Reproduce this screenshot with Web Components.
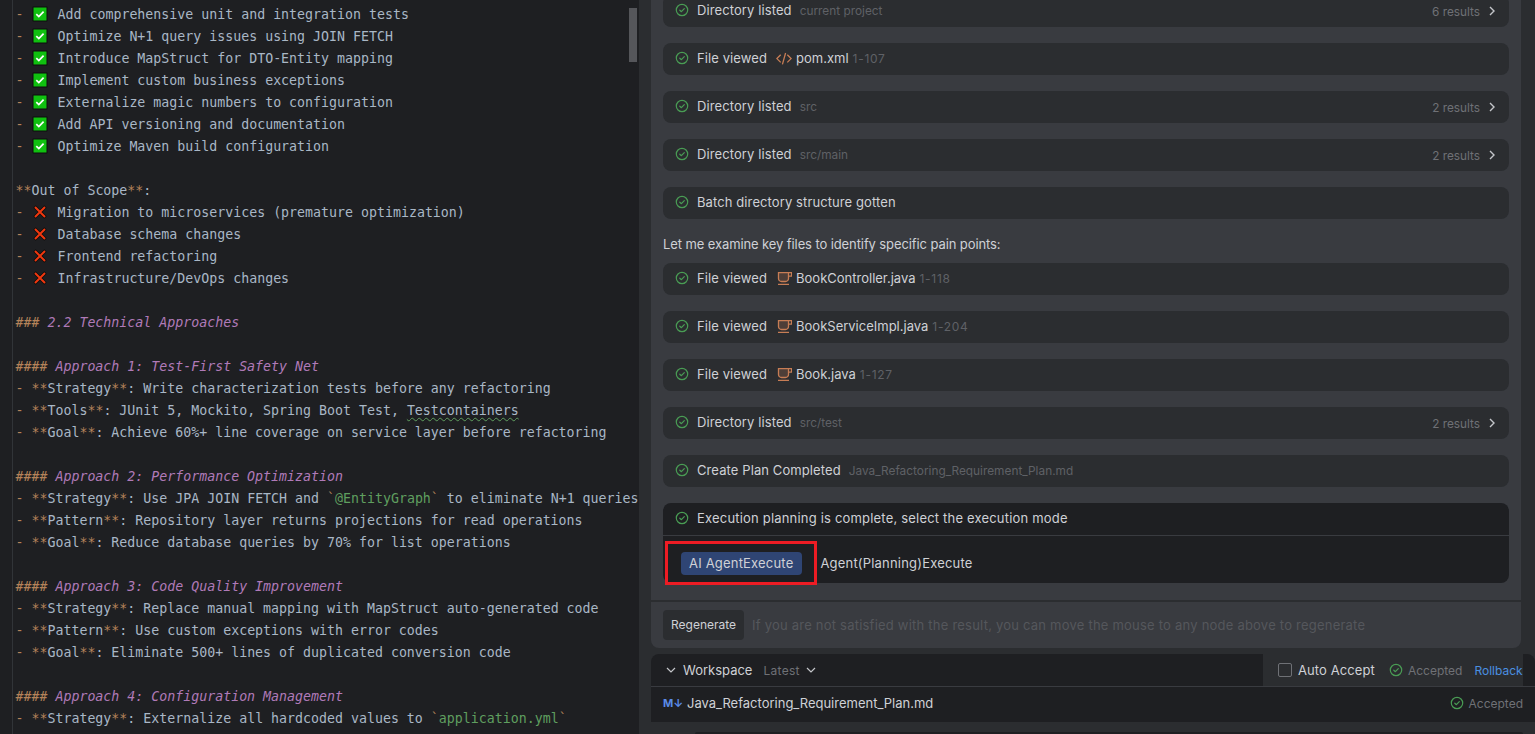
<!DOCTYPE html>
<html>
<head>
<meta charset="utf-8">
<title>Plan</title>
<style>
    html, body { margin: 0; height: 100%; background: #2b2d30; overflow: hidden; }
    body { display: flex; }
</style>
</head>
<body>
<md-editor></md-editor>
<agent-panel></agent-panel>

<script>
const CHECK = `<svg class="ok" width="14" height="14" viewBox="0 0 14 14" fill="none"><circle cx="7" cy="7" r="5.7" stroke="#499c54" stroke-width="1.2"/><path d="M4.8 7.2l1.6 1.5 2.9-3" stroke="#499c54" stroke-width="1.2" stroke-linecap="round" stroke-linejoin="round"/></svg>`;

const LINES = [
    'done:Add comprehensive unit and integration tests',
    'done:Optimize N+1 query issues using JOIN FETCH',
    'done:Introduce MapStruct for DTO-Entity mapping',
    'done:Implement custom business exceptions',
    'done:Externalize magic numbers to configuration',
    'done:Add API versioning and documentation',
    'done:Optimize Maven build configuration',
    '',
    'bold:Out of Scope:',
    'no:Migration to microservices (premature optimization)',
    'no:Database schema changes',
    'no:Frontend refactoring',
    'no:Infrastructure/DevOps changes',
    '',
    'h:### :2.2 Technical Approaches',
    '',
    'h:#### :Approach 1: Test-First Safety Net',
    'item:Strategy:Write characterization tests before any refactoring',
    'item:Tools:JUnit 5, Mockito, Spring Boot Test, ~Testcontainers',
    'item:Goal:Achieve 60%+ line coverage on service layer before refactoring',
    '',
    'h:#### :Approach 2: Performance Optimization',
    'item:Strategy:Use JPA JOIN FETCH and `@EntityGraph` to eliminate N+1 queries',
    'item:Pattern:Repository layer returns projections for read operations',
    'item:Goal:Reduce database queries by 70% for list operations',
    '',
    'h:#### :Approach 3: Code Quality Improvement',
    'item:Strategy:Replace manual mapping with MapStruct auto-generated code',
    'item:Pattern:Use custom exceptions with error codes',
    'item:Goal:Eliminate 500+ lines of duplicated conversion code',
    '',
    'h:#### :Approach 4: Configuration Management',
    'item:Strategy:Externalize all hardcoded values to `application.yml`'
];

class MdEditor extends HTMLElement {
    constructor() {
        super();
        this.attachShadow({ mode: 'open' });
    }

    connectedCallback() {
        this.render();
    }

    renderLine(line) {
        if (!line) return '&nbsp;';
        const parts = line.split(':');
        const kind = parts[0];
        const rest = parts.slice(1).join(':');
        if (kind === 'done' || kind === 'no') {
            const icon = kind === 'done'
                ? `<svg class="emoji" width="16" height="16" viewBox="0 0 16 16"><rect x="0.5" y="0.5" width="15" height="15" rx="1" fill="#0c0c0c"/><rect x="1.5" y="1.5" width="13" height="13" fill="#10c010"/><path d="M4.3 8.2l2.5 2.4 4.8-5" fill="none" stroke="#fff" stroke-width="1.7"/></svg>`
                : `<svg class="emoji" width="16" height="16" viewBox="0 0 16 16"><path d="M2.5 2.5l11 11M13.5 2.5l-11 11" fill="none" stroke="#0c0c0c" stroke-width="3.4"/><path d="M3 3l10 10M13 3L3 13" fill="none" stroke="#f0380f" stroke-width="2"/></svg>`;
            return `<span class="mark">-</span> ${icon} <span>${rest}</span>`;
        }
        if (kind === 'bold') {
            return `<span class="mark">**</span>${parts[1]}<span class="mark">**</span>:`;
        }
        if (kind === 'h') {
            return `<em><span class="mark">${parts[1]}</span><span class="head">${parts.slice(2).join(':')}</span></em>`;
        }
        // item: - **Name**: text
        let text = parts.slice(2).join(':');
        text = text.replace(/`([^`]+)`/g, '<span class="mark">`</span><span class="code">$1</span><span class="mark">`</span>');
        text = text.replace(/~(\w+)/, '<span class="typo">$1</span>');
        return `<span class="mark">- **</span>${parts[1]}<span class="mark">**</span>: ${text}`;
    }

    render() {
        this.shadowRoot.innerHTML = `
            <style>
                :host {
                    display: flex;
                    flex: 0 0 639px;
                    height: 100%;
                    box-sizing: border-box;
                    background: #1e1f22;
                    overflow: hidden;
                }
                .gutter { flex: 0 0 12px; border-right: 1px solid #313438; }
                .code-lines {
                    flex: 1;
                    min-width: 0;
                    padding: 4px 0 0 2.5px;
                    font: 13.28px/22px "DejaVu Sans Mono", monospace;
                    color: #a9b7c6;
                    white-space: pre;
                }
                .row { height: 22px; }
                .mark { color: #b5835a; }
                .head { color: #b07ab8; }
                em { font-style: italic; }
                .code { color: #5f9e5f; }
                .typo { text-decoration: underline wavy #5f9e5f 1px; text-underline-offset: 2px; }
                .emoji { vertical-align: -3px; margin: 0 2px 0 0; }
                .bar { flex: 0 0 8px; width: 8px; margin: 8px 2px 0 0; height: 54px; background: #55565a; }
            </style>
            <div class="gutter"></div>
            <div class="code-lines">${LINES.map(l => `<div class="row">${this.renderLine(l)}</div>`).join('')}</div>
            <div class="bar"></div>
        `;
    }
}

class ToolCard extends HTMLElement {
    constructor() {
        super();
        this.attachShadow({ mode: 'open' });
    }

    connectedCallback() {
        const icon = this.getAttribute('icon');
        const results = this.getAttribute('results');
        let fileIcon = '';
        if (icon === 'xml') {
            fileIcon = `<svg class="fi" width="16" height="14" viewBox="0 0 16 14" fill="none" stroke="#c77d55" stroke-width="1.3"><path d="M4.7 2.8L0.9 6.6l3.8 3.8M11.3 2.8l3.8 3.8-3.8 3.8M9.6 1L6.4 12.4"/></svg>`;
        } else if (icon === 'java') {
            fileIcon = `<svg class="fi" width="16" height="16" viewBox="0 0 16 16" fill="#c77d55" fill-opacity=".22" stroke="#c77d55" stroke-width="1.3"><path d="M2.5 1.7h10v5.8a3 3 0 0 1-3 3H5.5a3 3 0 0 1-3-3z"/><path fill="none" d="M12.5 1.7h3v3.5h-3M2 13.4h11"/></svg>`;
        }
        this.shadowRoot.innerHTML = `
            <style>
                :host {
                    display: flex;
                    align-items: center;
                    height: 32px;
                    flex: none;
                    box-sizing: border-box;
                    padding: 0 12px 2px;
                    background: #2b2d30;
                    border-radius: 8px;
                    font-size: 13px;
                    color: #cfd1d6;
                }
                .ok { flex: none; margin-right: 8px; }
                .name { white-space: pre; letter-spacing: .1px; }
                .name.file { letter-spacing: 0; }
                .fi { margin: 0 4px 0 9px; flex: none; position: relative; top: 1px; }
                .sub { margin-left: 8px; font-size: 11.85px; color: #5f6166; position: relative; top: 1px; }
                .range { margin-left: 4px; font-size: 12px; letter-spacing: .7px; color: #5f6166; }
                .res { margin-left: auto; font-size: 11.8px; color: #6f7176; position: relative; top: 2px; }
                .chev { margin-left: 7px; flex: none; position: relative; top: 1px; }
            </style>
            ${CHECK}
            <span class="name">${this.getAttribute('label')}</span>
            ${fileIcon}
            ${icon ? `<span class="name file">${this.getAttribute('file')}</span><span class="range">${this.getAttribute('range')}</span>` : ''}
            ${this.hasAttribute('sub') ? `<span class="sub">${this.getAttribute('sub')}</span>` : ''}
            ${results ? `<span class="res">${results} results</span><svg class="chev" width="10" height="10" viewBox="0 0 10 10" fill="none" stroke="#c4c6ca" stroke-width="1.4"><path d="M3 1l4 4-4 4"/></svg>` : ''}
        `;
    }
}

class ExecCard extends HTMLElement {
    constructor() {
        super();
        this.attachShadow({ mode: 'open' });
        this.shadowRoot.innerHTML = `
            <style>
                :host {
                    display: block;
                    flex: none;
                    height: 80px;
                    background: #1e1f22;
                    border-radius: 8px;
                    font-size: 13px;
                    letter-spacing: .19px;
                    color: #cfd1d6;
                }
                .top {
                    display: flex;
                    align-items: center;
                    height: 30px;
                    padding: 0 12px 2px;
                    border-bottom: 1px solid #393b40;
                }
                .ok { margin-right: 8px; }
                .modes { display: flex; align-items: center; height: 47px; box-sizing: border-box; padding: 7px 0 0 18px; gap: 18px; }
                .pick { position: relative; }
                .pick::after {
                    content: "";
                    position: absolute;
                    inset: -11px -15px -10px -16px;
                    border: 3px solid #ed1c24;
                    pointer-events: none;
                }
                .active {
                    display: block;
                    height: 23px;
                    line-height: 23px;
                    padding: 0 9px 0 8px;
                    background: #2f4574;
                    border-radius: 4px;
                }
            </style>
            <div class="top">${CHECK}<span>Execution planning is complete, select the execution mode</span></div>
            <div class="modes">
                <span class="pick"><span class="active">AI AgentExecute</span></span>
                <span>Agent(Planning)Execute</span>
            </div>
        `;
    }
}

class WorkspaceBar extends HTMLElement {
    constructor() {
        super();
        this.attachShadow({ mode: 'open' });
        const down = `<svg width="10" height="10" viewBox="0 0 10 10" fill="none" stroke="#c4c6ca" stroke-width="1.2"><path d="M1 3l4 4 4-4"/></svg>`;
        this.shadowRoot.innerHTML = `
            <style>
                :host {
                    display: block;
                    flex: none;
                    height: 68px;
                    margin: 6px 0 0 12px;
                    background: #1e1f22;
                    border-radius: 8px 8px 0 0;
                    font-size: 13px;
                    color: #cfd1d6;
                }
                .head { display: flex; height: 32px; border-bottom: 1px solid #393b40; }
                .left { display: flex; align-items: center; flex: 1; padding-left: 15px; }
                .left .title { margin: 0 11px 0 7px; }
                .left .latest { font-size: 12px; letter-spacing: .3px; color: #6f7176; margin-right: 6px; }
                .right {
                    display: flex;
                    align-items: center;
                    flex: 0 0 260px;
                    background: #2b2d30;
                    margin-right: 12px;
                    padding-left: 15px;
                    box-sizing: border-box;
                    white-space: nowrap;
                    overflow: hidden;
                }
                .box { width: 12px; height: 12px; border: 1px solid #6f7176; border-radius: 2px; margin-right: 6px; }
                .auto { margin-right: 14px; letter-spacing: .1px; }
                .ok { margin-right: 5px; }
                .acc { font-size: 12px; color: #6f7176; }
                .rollback { margin-left: 12px; font-size: 12px; color: #4a8fe0; }
                .file { display: flex; align-items: center; height: 35px; padding: 0 12px 3px; box-sizing: border-box; }
                .md { font: bold 11px Inter, sans-serif; color: #5a8be8; width: 24px; flex: none; white-space: nowrap; }
                .file .ok { margin-left: auto; }
            </style>
            <div class="head">
                <div class="left">${down}<span class="title">Workspace</span><span class="latest">Latest</span>${down}</div>
                <div class="right">
                    <span class="box"></span><span class="auto">Auto Accept</span>
                    ${CHECK}<span class="acc">Accepted</span><span class="rollback">Rollback</span>
                </div>
            </div>
            <div class="file">
                <span class="md">M↓</span><span>Java_Refactoring_Requirement_Plan.md</span>
                ${CHECK}<span class="acc">Accepted</span>
            </div>
        `;
    }
}

class AgentPanel extends HTMLElement {
    constructor() {
        super();
        this.attachShadow({ mode: 'open' });
    }

    connectedCallback() {
        this.shadowRoot.innerHTML = `
            <style>
                :host {
                    display: flex;
                    flex-direction: column;
                    flex: 1;
                    min-width: 0;
                    height: 100%;
                    overflow: hidden;
                    box-sizing: border-box;
                    font-family: Inter, "Liberation Sans", sans-serif;
                }
                .chat {
                    flex: 1;
                    min-height: 0;
                    display: flex;
                    flex-direction: column;
                    justify-content: flex-end;
                    gap: 16px;
                    margin: 0 14px 0 12px;
                    padding: 0 12px 17px;
                    background: #393b40;
                    overflow: hidden;
                }
                .say { flex: none; height: 28px; margin: -5px 0 -11px; line-height: 28px; font-size: 13px; letter-spacing: -.1px; color: #cfd1d6; }
                .regen {
                    flex: none;
                    display: flex;
                    align-items: center;
                    gap: 8px;
                    height: 46px;
                    margin: 2px 14px 0 12px;
                    padding: 0 10px 0 12px;
                    background: #393b40;
                    border-radius: 0 0 8px 8px;
                    font-size: 13px;
                    letter-spacing: .22px;
                    color: #55575c;
                }
                .regen b {
                    font-weight: 400;
                    font-size: 12px;
                    letter-spacing: 0;
                    color: #cfd1d6;
                    background: #2b2d30;
                    height: 30px;
                    line-height: 30px;
                    padding: 0 8px;
                    border-radius: 4px;
                }
                .input {
                    flex: none;
                    height: 2px;
                    margin: 10px 12px 0 56px;
                    background: #1e1f22;
                    border-radius: 2px 2px 0 0;
                }
            </style>
            <div class="chat">
                <tool-card label="Directory listed" sub="current project" results="6"></tool-card>
                <tool-card label="File viewed" icon="xml" file="pom.xml" range="1-107"></tool-card>
                <tool-card label="Directory listed" sub="src" results="2"></tool-card>
                <tool-card label="Directory listed" sub="src/main" results="2"></tool-card>
                <tool-card label="Batch directory structure gotten"></tool-card>
                <div class="say">Let me examine key files to identify specific pain points:</div>
                <tool-card label="File viewed" icon="java" file="BookController.java" range="1-118"></tool-card>
                <tool-card label="File viewed" icon="java" file="BookServiceImpl.java" range="1-204"></tool-card>
                <tool-card label="File viewed" icon="java" file="Book.java" range="1-127"></tool-card>
                <tool-card label="Directory listed" sub="src/test" results="2"></tool-card>
                <tool-card label="Create Plan Completed" sub="Java_Refactoring_Requirement_Plan.md"></tool-card>
                <exec-card></exec-card>
            </div>
            <div class="regen"><b>Regenerate</b><span>If you are not satisfied with the result, you can move the mouse to any node above to regenerate</span></div>
            <workspace-bar></workspace-bar>
            <div class="input"></div>
        `;
    }
}

customElements.define('md-editor', MdEditor);
customElements.define('tool-card', ToolCard);
customElements.define('exec-card', ExecCard);
customElements.define('workspace-bar', WorkspaceBar);
customElements.define('agent-panel', AgentPanel);
</script>
</body>
</html>
